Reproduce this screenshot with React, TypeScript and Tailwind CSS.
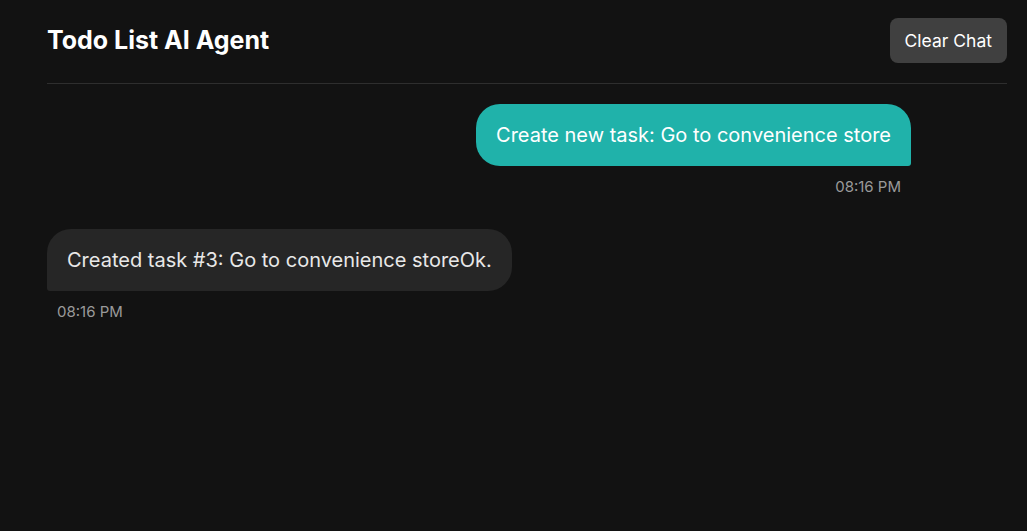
import React from "react";

export default function App() {
  return (
    <div
      className="min-h-[531px] w-full bg-[#121212] text-white"
      style={{ fontFamily: "Inter, 'Noto Sans', sans-serif" }}
    >
      <div className="pl-[47px] pr-[20px]">
        <header className="flex items-center justify-between pt-[18px] pb-[20px] border-b border-[#2e2e2e]">
          <h1 className="text-[25px] font-bold leading-[45px]">Todo List AI Agent</h1>
          <button className="h-[45px] rounded-[8px] bg-[#404040] px-[15px] pt-[1px] text-[17.5px] text-white">
            Clear Chat
          </button>
        </header>
        <main className="flex flex-col pt-[20px] pr-[96px]">
          <div className="flex flex-col items-end">
            <div className="rounded-[24px] rounded-br-[3px] bg-[#20b2aa] px-[20px] py-[16px] text-[20px] leading-[30px] text-white">
              Create new task: Go to convenience store
            </div>
            <div className="mt-[11px] px-[10px] text-[15px] leading-[20px] text-[#9a9a9a]">08:16 PM</div>
          </div>
          <div className="mt-[32px] flex flex-col items-start">
            <div className="rounded-[24px] rounded-bl-[3px] bg-[#262626] px-[20px] py-[16px] text-[20px] leading-[30px] text-[#e8e8e8]">
              Created task #3: Go to convenience storeOk.
            </div>
            <div className="mt-[11px] px-[10px] text-[15px] leading-[20px] text-[#9a9a9a]">08:16 PM</div>
          </div>
        </main>
      </div>
    </div>
  );
}
